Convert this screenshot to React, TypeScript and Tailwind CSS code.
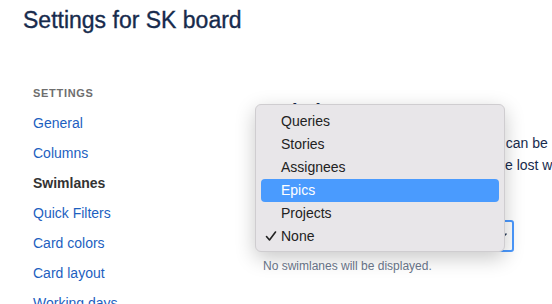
import React from 'react';

const sections = ['General', 'Columns', 'Swimlanes', 'Quick Filters', 'Card colors', 'Card layout', 'Working days'];
const options = ['Queries', 'Stories', 'Assignees', 'Epics', 'Projects', 'None'];

const App: React.FC = () => {
  const active = 'Swimlanes';
  const highlighted = 'Epics';
  const selected = 'None';

  return (
    <div className="relative w-[552px] h-[304px] overflow-hidden bg-white font-['Liberation_Sans',Arial,sans-serif]">
      <h1 className="pl-[23px] pt-[6px] text-[23px] leading-[28px] text-[#172B4D] whitespace-nowrap [-webkit-text-stroke:0.35px_#172B4D]">
        Settings for SK board
      </h1>

      <div className="flex mt-[51px]">
        {/* Sidebar */}
        <nav className="w-[263px] shrink-0 pl-[33px]">
          <div className="h-[16px] leading-[16px] mb-[7px] text-[11px] font-bold tracking-[0.7px] text-[#6E6E6E]">
            SETTINGS
          </div>
          {sections.map((s) => (
            <div
              key={s}
              className={`h-[30px] leading-[30px] text-[14px] whitespace-nowrap ${
                s === active ? 'font-bold text-[#333333]' : 'text-[#1D5FBF]'
              }`}
            >
              {s}
            </div>
          ))}
        </nav>

        {/* Main */}
        <main className="flex-1 min-w-0 pt-[14px]">
          <h2 className="text-[20px] leading-[24px] font-semibold text-[#172B4D]">Swimlanes</h2>
          <div className="mt-[9px] text-[14px] leading-[22px] text-[#172B4D] whitespace-nowrap">
            <div>Swimlanes are horizontal sections that can be used to group issues on your board.</div>
            <div>Also, custom queries you created will be lost when you change the swimlane base.</div>
          </div>
          <div className="mt-[16px] h-[20px] leading-[20px] text-[12px] font-semibold text-[#6B778C]">
            Base swimlanes on
          </div>
          <div className="mt-[8px] w-[251px] h-[32px] border-2 border-[#4C9AFF] rounded-[3px] flex items-center justify-between pl-[8px] pr-[5px] text-[14px] text-[#172B4D]">
            <span>{selected}</span>
            <svg width="10" height="6" viewBox="0 0 10 6" fill="none">
              <path d="M1 1l4 4 4-4" stroke="#253858" strokeWidth="1.6" strokeLinecap="round" strokeLinejoin="round" />
            </svg>
          </div>
          <div className="mt-[6px] h-[16px] leading-[16px] text-[12px] text-[#6B778C]">
            No swimlanes will be displayed.
          </div>
        </main>
      </div>

      {/* Native select popup */}
      <div className="absolute left-[255px] top-[104px] w-[250px] h-[148px] rounded-[6px] bg-[#E8E6E9] px-[5px] py-[5px] border border-[#CFCDD0] shadow-[0_6px_20px_rgba(0,0,0,0.22)]">
        {options.map((o) => (
          <div
            key={o}
            className={`relative h-[23px] leading-[23px] pl-[20px] text-[14px] rounded-[4px] ${
              o === highlighted ? 'bg-[#4A9BFE] text-white' : 'text-[#222222]'
            }`}
          >
            {o === selected && (
              <svg className="absolute left-[4px] top-[5px]" width="12" height="12" viewBox="0 0 12 12" fill="none">
                <path d="M1.5 6.5l3 3.5 6-8" stroke="#222222" strokeWidth="1.6" strokeLinecap="round" strokeLinejoin="round" />
              </svg>
            )}
            {o}
          </div>
        ))}
      </div>
    </div>
  );
};

export default App;
